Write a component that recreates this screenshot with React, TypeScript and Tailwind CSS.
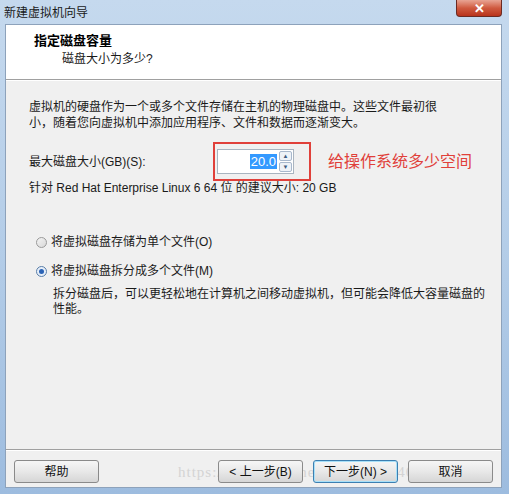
import React from "react";

const font = { fontFamily: '"Liberation Sans", "Noto Sans CJK SC", sans-serif' };

function Btn({ label, primary }: { label: string; primary?: boolean }) {
  return (
    <div
      className={`flex h-[23px] w-[85px] items-center justify-center rounded-[3px] border bg-gradient-to-b from-[#f6f6f6] via-[#e8e8e8] to-[#d6d6d6] text-[12px] text-[#111] ${
        primary ? "border-[#3c7fb1] shadow-[inset_0_0_0_1px_#a8e0f8]" : "border-[#8a8a8a]"
      }`}
    >
      {label}
    </div>
  );
}

export default function App() {
  return (
    <div
      style={font}
      className="flex h-[494px] w-[509px] flex-col bg-gradient-to-b from-[#c5d9ee] via-[#b4cde8] to-[#9dbcdf]"
    >
      {/* title bar */}
      <div className="flex h-[24px] items-start justify-between pl-[4px] pr-[7px]">
        <span className="mt-[4px] text-[12px] text-[#1a1a1a]">新建虚拟机向导</span>
        <div className="flex h-[17px] w-[46px] items-center justify-center rounded-b-[4px] border border-t-0 border-[#6b2a22] bg-gradient-to-b from-[#e8a493] via-[#cf5a3f] to-[#b8321b] text-[13px] font-bold leading-none text-white">
          ✕
        </div>
      </div>

      {/* client */}
      <div className="ml-[5px] mr-[7px] flex flex-1 flex-col border border-[#8da2bb] bg-[#f0f0f0]">
        <div className="h-[55px] border-b border-[#a0a0a0] bg-white pl-[28px] pt-[7px]">
          <div className="text-[13px] font-bold leading-[18px] text-black">指定磁盘容量</div>
          <div className="pl-[28px] text-[12px] leading-[18px] text-[#1a1a1a]">磁盘大小为多少?</div>
        </div>
        <div className="flex-1 border-t border-white pl-[23px] pr-[10px] pt-[18px] text-[12px] text-[#1a1a1a]">
          <p className="leading-[16px]">
            虚拟机的硬盘作为一个或多个文件存储在主机的物理磁盘中。这些文件最初很
            <br />
            小，随着您向虚拟机中添加应用程序、文件和数据而逐渐变大。
          </p>

          <div className="mt-[11px] flex items-center">
            <span className="w-[184px]">最大磁盘大小(GB)(S):</span>
            <div className="flex h-[39px] w-[98px] items-center border-2 border-[#e0403a] pl-[2px]">
              <div className="flex h-[25px] w-[77px] items-center border border-[#a9b4c0] bg-white">
                <div className="flex flex-1 justify-end pr-[1px]">
                  <span className="bg-[#3399ff] px-[1px] text-[13px] leading-[15px] text-white">20.0</span>
                </div>
                <div className="flex h-full w-[15px] flex-col gap-[1px] p-[1px]">
                  <div className="flex flex-1 items-center justify-center rounded-[2px] border border-[#a8b8cc] bg-[#eef2f7] text-[6px] leading-none text-[#3d5b80]">▲</div>
                  <div className="flex flex-1 items-center justify-center rounded-[2px] border border-[#a8b8cc] bg-[#eef2f7] text-[6px] leading-none text-[#3d5b80]">▼</div>
                </div>
              </div>
            </div>
            <span className="ml-[17px] text-[16px] text-[#e0403a]">给操作系统多少空间</span>
          </div>

          <p className="mt-[-1px] leading-[16px]">针对 Red Hat Enterprise Linux 6 64 位 的建议大小: 20 GB</p>

          <div className="mt-[37px] flex items-center gap-[4px] pl-[7px]">
            <span className="h-[11px] w-[11px] rounded-full border border-[#9a9a9a] bg-gradient-to-br from-[#f4f4f4] to-[#d8d8d8]" />
            <span>将虚拟磁盘存储为单个文件(O)</span>
          </div>
          <div className="mt-[11px] flex items-center gap-[4px] pl-[7px]">
            <span className="flex h-[11px] w-[11px] items-center justify-center rounded-full border border-[#5a7ea8] bg-[#e6eef8]">
              <span className="h-[5px] w-[5px] rounded-full bg-[#2b63b5]" />
            </span>
            <span>将虚拟磁盘拆分成多个文件(M)</span>
          </div>
          <p className="mt-[7px] pl-[24px] leading-[15px]">
            拆分磁盘后，可以更轻松地在计算机之间移动虚拟机，但可能会降低大容量磁盘的
            <br />
            性能。
          </p>
        </div>

        {/* footer */}
        <div className="relative h-[38px] border-t border-[#a0a0a0]">
          <div className="absolute left-[172px] top-[11px] font-['Liberation_Serif'] text-[15px] tracking-[1px] text-[#d4d4d4]">
            https://blog.csdn.net/gfd54gd5f46
          </div>
          <div className="relative flex items-center border-t border-white pl-[8px] pr-[8px] pt-[9px]">
            <Btn label="帮助" />
            <div className="ml-auto flex gap-[10px]">
              <Btn label="< 上一步(B)" />
              <Btn label="下一步(N) >" primary />
              <Btn label="取消" />
            </div>
          </div>
        </div>
      </div>
      <div className="h-[6px]" />
    </div>
  );
}
